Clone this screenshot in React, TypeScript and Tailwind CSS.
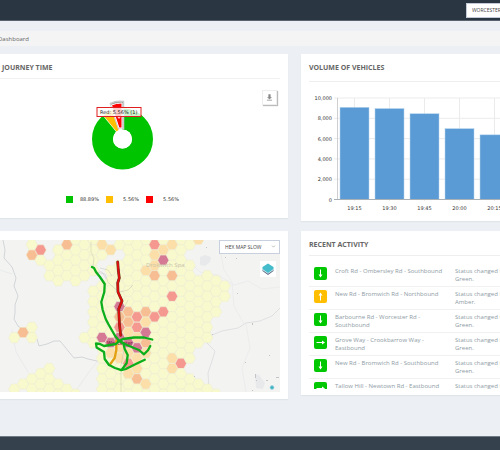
import React from "react";
import { ChevronDown } from "lucide-react";

type Tone = "y" | "l" | "o" | "r" | "p";

const TONES: Record<Tone, string> = {
  y: "#f9f9cb",
  l: "#fbdca3",
  o: "#f7bb8e",
  r: "#f4938a",
  p: "#d4728e",
};

const COL_W = 8.77;
const HALF_ROW = 5.16;
const ORIGIN_X = 31.8;
const ORIGIN_Y = 244.7;

// Each entry: column, first half-row, last half-row
const RUNS: [number, number, number][] = [
  [-2, 18, 18], [-2, 28, 28], [-1, 27, 27],
  [0, 0, 0], [0, 16, 18], [0, 26, 28],
  [1, 3, 3], [1, 25, 29], [2, 4, 6], [2, 24, 28],
  [3, 1, 7], [3, 27, 29], [4, 2, 6], [4, 28, 28], [5, -1, 7], [5, 29, 29],
  [6, 0, 6], [6, 18, 18], [7, -1, 3], [7, 5, 5], [7, 9, 19], [8, 2, 2], [8, 8, 28],
  [9, 5, 29], [10, 0, 0], [10, 4, 28], [11, -1, 29], [12, 0, 28], [13, -1, 29],
  [14, 0, 28], [15, -1, 29], [16, 0, 28], [17, -1, 29], [18, 0, 0], [18, 4, 22],
  [18, 26, 28], [19, 7, 19], [19, 27, 29], [20, 6, 18], [20, 28, 28],
  [21, 7, 13], [21, 29, 29], [22, 8, 10],
];

const HOT: Record<Exclude<Tone, "y">, [number, number][]> = {
  l: [
    [8, 0], [9, 1], [16, 0], [15, 1], [14, 2], [14, 4], [13, 5], [19, -1], [13, 15], [11, 17],
    [12, 18], [10, 20], [10, 22], [9, 21], [11, 21], [12, 22], [13, 21], [11, 25], [12, 24],
    [13, 27], [16, 22], [16, 24],
  ],
  o: [[4, 0], [0, 2], [-1, 17], [14, 6], [16, 6], [11, 13], [13, 13], [10, 14], [11, 15], [13, 19], [12, 26]],
  r: [[1, 1], [14, 0], [16, 10], [15, 13], [12, 14], [14, 14], [10, 16], [12, 16], [11, 23], [17, 23]],
  p: [[15, 3], [10, 12], [13, 17], [8, 18], [9, 19], [10, 18], [11, 19], [12, 20]],
};

function buildCells() {
  const cells = new Map<string, { c: number; k: number; tone: Tone }>();
  RUNS.forEach(([c, from, to]) => {
    for (let k = from; k <= to; k += 2) cells.set(`${c},${k}`, { c, k, tone: "y" });
  });
  (Object.keys(HOT) as Exclude<Tone, "y">[]).forEach((tone) =>
    HOT[tone].forEach(([c, k]) => cells.set(`${c},${k}`, { c, k, tone }))
  );
  return [...cells.values()];
}

const CELLS = buildCells();

function hexPoints(c: number, k: number) {
  const x = ORIGIN_X + c * COL_W;
  const y = ORIGIN_Y + k * HALF_ROW;
  return [[5.7, 0], [2.9, 5.1], [-2.9, 5.1], [-5.7, 0], [-2.9, -5.1], [2.9, -5.1]]
    .map(([dx, dy]) => `${(x + dx).toFixed(1)},${(y + dy).toFixed(1)}`)
    .join(" ");
}

const GREEN_ROUTES = [
  "M92 267l2 1 2 4 4 5 4.7 7-.4 8-3 10 1.4 8 3 9 2.6 5 6.7 11.700 4 5",
  "M119 341l-3 3-12 2-4-2-4-.6.6 4 7.400 4.600.7 7 4.300 6 6 3 6.300 2.200 4.500-1.200 10-5 9-4.300",
  "M119 341l4.300 2 1.400 6 3 6-1 8-4.400 6",
  "M119 341l4-2 11-1.500 10 0 8.300 2",
  "M121 342l6 3 7 3 5 2 5 4.300 4-4 2.300-4.300",
];

const RED_ROUTE = "M117.700 262l.6 8 1 8-1.600 5 .3 9 4 9-3.300 8 .8 16 1.200 10.300";

function HexMap() {
  return (
    <svg
      role="img"
      aria-label="Hex map"
      viewBox="0 240 280 152"
      preserveAspectRatio="xMinYMin slice"
      className="block h-[152px] w-full bg-[#f3f3f2]"
    >
      <g fill="none" stroke="#dcdedf" strokeWidth="0.9">
        <path d="M3 240l2 10-1 8 8 9 4 11-2 8 4 10-3 9 0 8-1 6 4 7 8 6 6 3 5 4 2 7 8-2 7-3 6 0 5 6 4 5 5 6 8-1 6 2 9 2 8 3" stroke="#ced1d4" />
        <path d="M91 240l-1 12 4 8-2 8 10 4 6 10 6 8 12 3 8-3 5-7M126 345l-3 18-3 12 2 17" />
        <path d="M280 308l-8 8-12 5-14 2-8 5-16 3-10 4-9 3 4 5 8 8-3 10-4 12 1 18" />
        <path d="M0 270l12 4M12 330l4 22 12 20M75 392l14-20 8-10" stroke="#e8e9e9" />
        <path d="M190 262l10 10 18 3 16 10 14-4 14 8 18-2M220 250l4 20 8 12 2 24 10 18M246 324l4 24-8 20 4 24" stroke="#ebebeb" />
      </g>
      <path d="M200 257l5-2 6 2-1 5-5 4-5-1zM255 374l4 1 6 8-2 6-7-1z" fill="#e8e9eb" />
      <g stroke="#eeeed2" strokeWidth="0.6">
        {CELLS.map(({ c, k, tone }) => (
          <polygon key={`${c},${k}`} points={hexPoints(c, k)} fill={TONES[tone]} fillOpacity="0.95" />
        ))}
      </g>
      <g fill="none" stroke="#a9aa9c" strokeOpacity="0.4" strokeWidth="0.8">
        <path d="M91 242l0 10 3 6-1 8 4 6 8 2 3 8 6 6 6 4 8-2 5-5M100 268l8 2 4 6M128 300l-3 6-4 4M125 345l-4 20 0 27" />
      </g>
      <g fill="#c3c4c7">
        <path d="M206 247h1v1h-1zM225 257h1v1h-1zM236 258h1v1h-1zM237 293h1v1h-1zM252 323h1v2h-1zM212 334h1v1h-1zM245 362h1v1h-1zM269 355h1v1h-1zM255 374h1v4h-1zM256 380h1v1h-1zM266 380h2v1h-2zM276 377h3v1h-3zM252 390h1v1h-1zM194 376h1v1h-1z" />
      </g>
      <text x="146" y="267" fontSize="6" fill="#c9c5a8" fontFamily="Open Sans, sans-serif">Droitwich Spa</text>
      <text x="107" y="345" fontSize="5" fontWeight="700" fill="#8c3452" fontFamily="Open Sans, sans-serif">Worcester</text>
      <g fill="none" strokeLinecap="round" strokeLinejoin="round" strokeWidth="2.3">
        <path d="M116.300 341v9l-1.600 8-4.400 6" stroke="#e3a112" />
        {GREEN_ROUTES.map((d) => (
          <path key={d} d={d} stroke="#0cae1c" />
        ))}
        <path d={RED_ROUTE} stroke="#5e3a20" strokeWidth="2.800" />
        <path d={RED_ROUTE} stroke="#dc0f0f" strokeWidth="2" />
      </g>
      <circle cx="272" cy="387.500" r="2" fill="#45b5c6" stroke="#a9d8df" strokeWidth="0.6" />
    </svg>
  );
}

function Donut() {
  return (
    <svg role="img" aria-label="Journey time split" viewBox="86 97 72 80" className="h-20 w-[72px]">
      <circle cx="122.500" cy="139" r="20" fill="none" stroke="#00c400" strokeWidth="21" />
      <path d="M122 139L99.500 111.500L110 104L122 104Z" fill="#ffffff" />
      <path d="M116.500 131.500L103.500 115.600A30.500 30.500 0 0 1 111.600 110.300L118.700 130Z" fill="#ffbf00" />
      <path d="M118.500 128.500L110.500 103.500Q116 100.500 123.500 101.500L123.500 128.500Z" fill="#8f8f8f" stroke="#c9c9c9" strokeWidth="1.500" />
      <path d="M119 128L111.500 105Q116 103 122 103L122 128Z" fill="#ff0000" stroke="#ffffff" strokeWidth="1" />
      <circle cx="122.500" cy="139" r="9.500" fill="#ffffff" />
      <path d="M97 107.500H141V116.500H121L119 119L117 116.500H97Z" fill="#ffffff" fillOpacity="0.8" />
      <rect x="97" y="107.500" width="44" height="9" fill="none" stroke="#e02020" strokeWidth="1" />
      <text x="100" y="114" fontSize="5" fill="#222222" fontFamily="DejaVu Sans, sans-serif">Red: 5.56% (1)</text>
    </svg>
  );
}

const BARS = [
  { label: "19:15", value: 9080 },
  { label: "19:30", value: 8960 },
  { label: "19:45", value: 8450 },
  { label: "20:00", value: 6980 },
  { label: "20:15", value: 6370 },
];

const TICKS = ["0", "2,000", "4,000", "6,000", "8,000", "10,000"];

function BarChart() {
  return (
    <svg
      role="img"
      aria-label="Volume of vehicles by time"
      viewBox="309 90 245 124"
      className="block h-[124px] w-[245px] max-w-none"
      fontSize="5"
      fontFamily="DejaVu Sans, sans-serif"
      fill="#333333"
    >
      {TICKS.map((t, i) => (
        <g key={t}>
          <path d={`M334 ${199.5 - i * 20.3}H554`} stroke="#ebebeb" />
          <text x="332" y={201.5 - i * 20.3} textAnchor="end">{t}</text>
        </g>
      ))}
      {BARS.map((b, i) => (
        <g key={b.label}>
          <path d={`M${354.5 + i * 35} 98V201`} stroke="#ebebeb" />
          <rect x={340 + i * 35} y={199.5 - b.value * 0.01015} width="29" height={b.value * 0.01015} fill="#5b9bd5" stroke="#b5d3ed" strokeWidth="0.5" />
          <text x={354.5 + i * 35} y="210" textAnchor="middle">{b.label}</text>
        </g>
      ))}
      <path d="M337.500 98V200" stroke="#cfcfcf" />
      <path d="M334 199.500H554" stroke="#a9b0b6" />
    </svg>
  );
}

type Dir = "down" | "up" | "right";
const ACTIVITY: { road: string; dir: Dir; amber?: boolean }[] = [
  { road: "Croft Rd - Ombersley Rd - Southbound", dir: "down" },
  { road: "New Rd - Bromwich Rd - Northbound", dir: "up", amber: true },
  { road: "Barbourne Rd - Worcester Rd - Southbound", dir: "down" },
  { road: "Grove Way - Crookbarrow Way - Eastbound", dir: "right" },
  { road: "New Rd - Bromwich Rd - Southbound", dir: "down" },
  { road: "Tallow Hill - Newtown Rd - Eastbound", dir: "right" },
];

const ARROWS: Record<Dir, string> = {
  down: "M6 2.500h1v5h1.500L6.500 10.500L4.500 7.500H6z",
  up: "M6 10.500h1v-5h1.500L6.500 2.500L4.500 5.500H6z",
  right: "M2.500 6v1h5.500v1.500L11 6.500L8 4.500V6z",
};

function DirectionBadge({ dir, amber }: { dir: Dir; amber?: boolean }) {
  return (
    <span className={`size-[13px] shrink-0 rounded-[2px] ${amber ? "bg-[#ffbf00]" : "bg-[#00c800]"}`}>
      <svg viewBox="0 0 13 13" className="size-full" aria-hidden="true">
        <path d={ARROWS[dir]} fill="#ffffff" />
      </svg>
    </span>
  );
}

const LEGEND = [
  { label: "88.89%", swatch: "bg-[#00c400]" },
  { label: "5.56%", swatch: "bg-[#ffbf00]" },
  { label: "5.56%", swatch: "bg-[#ff0000]" },
];

export default function App() {
  return (
    <div className="flex min-h-screen flex-col overflow-hidden bg-[#ecf0f4] font-['Open_Sans',sans-serif] text-[6px] leading-2 text-[#666666]">
      <header className="flex h-[21px] items-center overflow-hidden border-b border-[#59636f] bg-[#2b3643]">
        <select
          aria-label="Area"
          className="-mr-7 ml-auto h-[15px] w-[62px] shrink-0 appearance-none border border-[#c2cad8] bg-white pl-[5px] text-[5px] text-[#444444]"
        >
          <option>WORCESTER</option>
        </select>
      </header>

      <nav aria-label="Breadcrumb" className="mt-2.5 flex h-[15px] items-center bg-[#f4f4f4]">
        <a href="#dashboard" className="-ml-0.5">Dashboard</a>
      </nav>

      <main className="mt-2 grid flex-1 grid-cols-[288fr_199fr] content-start items-start gap-x-[13px] gap-y-2.5">
        <section className="h-[164px] bg-white pr-2 shadow-[0_1px_1px_#e0e5ea]">
          <h2 className="flex h-[25px] items-center border-b border-[#f1f1f1] pt-1 pl-0.5 text-[7px] font-bold">JOURNEY TIME</h2>
          <div className="flex items-start justify-between pt-[11px] pr-[3px] pl-[86px]">
            <div className="pt-[7px]">
              <Donut />
            </div>
            <button aria-label="Download" className="flex size-[15px] items-center justify-center border border-[#eeeeee] bg-white shadow-[1px_1px_1px_#bbbbbb]">
              <svg viewBox="0 0 15 15" className="size-[11px] shrink-0" fill="#888888" aria-hidden="true">
                <path d="M6 3h3v4h2L7.500 10L4 7h2zM4 10.500h7v1.200H4z" />
              </svg>
            </button>
          </div>
          <ul className="mt-[18px] flex gap-[7px] pl-[66px] font-['DejaVu_Sans',sans-serif] text-[5px] text-[#333333]">
            {LEGEND.map((item, i) => (
              <li key={i} className="flex w-[33px] items-center justify-between">
                <span className={`size-[7px] ${item.swatch}`} />
                {item.label}
              </li>
            ))}
          </ul>
        </section>

        <section className="min-w-0 overflow-hidden bg-white pl-2 shadow-[0_1px_1px_#e0e5ea]">
          <h2 className="flex h-7 items-center border-b border-[#eeeeee] text-[7px] font-bold">VOLUME OF VEHICLES</h2>
          <div className="pt-2 pb-[7px]">
            <BarChart />
          </div>
        </section>

        <section className="bg-white pt-[9px] pr-2 pb-[7px] shadow-[0_1px_1px_#e0e5ea]">
          <div className="relative">
            <HexMap />
            <label className="absolute top-0 right-0 block">
              <select
                aria-label="Map layer"
                className="block h-3.5 w-[61px] appearance-none border border-[#c8d0de] bg-white pl-[5px] text-[5px] text-[#444444]"
              >
                <option>HEX MAP SLOW</option>
              </select>
              <ChevronDown className="pointer-events-none absolute top-1 right-1 size-[5px]" />
            </label>
            <button aria-label="Layers" className="absolute top-[21px] right-1 flex size-4 items-center justify-center bg-white">
              <svg viewBox="0 0 16 16" className="size-4" aria-hidden="true">
                <path d="M2.500 10L8 14L13.500 10V8.500H2.500z" fill="#5d6d88" />
                <path d="M2.500 9L8 12.800L13.500 9V7H2.500z" fill="#ddeef2" />
                <path d="M8 2.500L13.500 6V8L8 12L2.500 8V6z" fill="#45bccb" />
              </svg>
            </button>
          </div>
        </section>

        <section className="min-w-0 overflow-hidden bg-white pb-1.5 pl-2 shadow-[0_1px_1px_#e0e5ea]">
          <h2 className="flex h-[25px] items-center border-b border-[#eeeeee] pt-1 text-[7px] font-bold">RECENT ACTIVITY</h2>
          <ul className="mt-2 h-[125px] overflow-hidden text-[#8e9ba5]">
            {ACTIVITY.map((a) => (
              <li key={a.road} className="flex h-[23px] items-start border-b border-[#f1f1f1] pt-[3px] pl-[5px]">
                <DirectionBadge dir={a.dir} amber={a.amber} />
                <span className="ml-2 w-[120px] shrink-0 pr-2">{a.road}</span>
                <span className="w-24 shrink-0">
                  {a.amber ? "Status changed from Green to Amber." : "Status changed from Amber to Green."}
                </span>
              </li>
            ))}
          </ul>
        </section>
      </main>

      <footer className="h-3.5 border-t border-[#707a86] bg-[#36414e]" />
    </div>
  );
}
